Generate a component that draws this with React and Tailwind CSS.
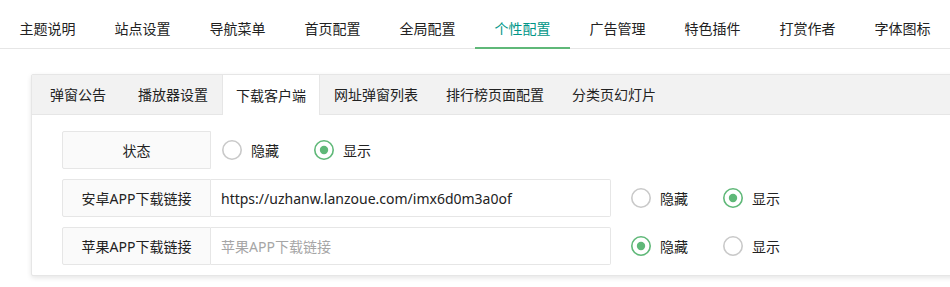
import React from "react";

const topTabs = ["主题说明","站点设置","导航菜单","首页配置","全局配置","个性配置","广告管理","特色插件","打赏作者","字体图标"];

function Radio({ checked, label }) {
  return (
    <div className="flex items-center">
      <svg width="20" height="20" viewBox="0 0 20 20" className="shrink-0">
        <circle cx="10" cy="10" r="9.2" fill="#fff" stroke={checked ? "#5FB878" : "#c9c9c9"} strokeWidth="1.6" />
        {checked && <circle cx="10" cy="10" r="4.2" fill="#5FB878" />}
      </svg>
      <span className="ml-[9px] text-[14px] text-[#222]">{label}</span>
    </div>
  );
}

function RadioPair({ first }) {
  return (
    <div className="flex items-center">
      <div className="w-[92px]"><Radio checked={first} label="隐藏" /></div>
      <Radio checked={!first} label="显示" />
    </div>
  );
}

function Label({ children }) {
  return (
    <div className="w-[149px] h-[38px] shrink-0 flex items-center justify-center bg-[#FAFAFA] border border-[#e6e6e6] rounded-l-[2px] text-[14px] text-[#222]">
      {children}
    </div>
  );
}

export default function App() {
  const font = "font-['Noto_Sans','Noto_Sans_CJK_SC',sans-serif]";
  return (
    <div className={`w-[950px] h-[287px] overflow-hidden bg-white ${font}`}>
      <div className="pt-[8px]">
        <div className="flex h-[41px] border-b border-[#e6e6e6]">
          {topTabs.map((t, i) => (
            <div
              key={t}
              className={`relative w-[95px] shrink-0 flex items-center justify-center text-[14px] ${i === 5 ? "text-[#009688]" : "text-[#222]"}`}
            >
              {t}
              {i === 5 && <div className="absolute left-0 right-0 bottom-[-1px] h-[2px] bg-[#5FB878]" />}
            </div>
          ))}
        </div>
      </div>

      <div className="ml-[31px] mt-[25px] w-[940px] border border-[#e6e6e6] rounded-[2px] shadow-[0_2px_5px_0_rgba(0,0,0,0.1)] bg-white">
        <div className="flex h-[40px] bg-[#f2f2f2] border-b border-[#e6e6e6] text-[14px] text-[#222]">
          <div className="px-[18px] flex items-center">弹窗公告</div>
          <div className="px-[14px] flex items-center">播放器设置</div>
          <div className="px-[13px] flex items-center bg-white border-x border-[#e6e6e6] h-[40px]">下载客户端</div>
          <div className="px-[14px] flex items-center">网址弹窗列表</div>
          <div className="px-[14px] flex items-center">排行榜页面配置</div>
          <div className="px-[14px] flex items-center">分类页幻灯片</div>
        </div>
        <div className="pl-[30px] pt-[16px] pb-[10px] flex flex-col gap-[10px]">
          <div className="flex items-center">
            <Label>状态</Label>
            <div className="ml-[11px]"><RadioPair first={false} /></div>
          </div>
          <div className="flex items-center">
            <Label>安卓APP下载链接</Label>
            <div className="w-[400px] h-[38px] border border-l-0 border-[#e6e6e6] rounded-r-[2px] flex items-center pl-[10px] text-[14px] text-[#222]">
              https://uzhanw.lanzoue.com/imx6d0m3a0of
            </div>
            <div className="ml-[20px]"><RadioPair first={false} /></div>
          </div>
          <div className="flex items-center">
            <Label>苹果APP下载链接</Label>
            <div className="w-[400px] h-[38px] border border-l-0 border-[#e6e6e6] rounded-r-[2px] flex items-center pl-[10px] text-[14px] text-[#a6a6a6]">
              苹果APP下载链接
            </div>
            <div className="ml-[20px]"><RadioPair first={true} /></div>
          </div>
        </div>
      </div>
    </div>
  );
}
